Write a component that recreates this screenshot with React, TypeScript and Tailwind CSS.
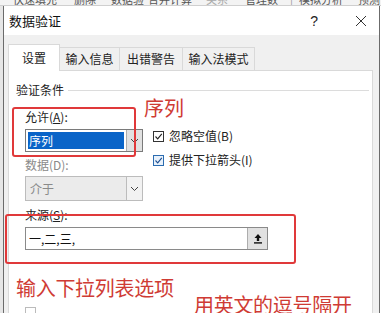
import React from "react";

const F = { fontFamily: '"Noto Sans CJK SC", "Microsoft YaHei", sans-serif' };

function Chevron() {
  return (
    <svg width="9" height="6" viewBox="0 0 9 6">
      <path d="M1 1 L4.5 4.5 L8 1" fill="none" stroke="#444" strokeWidth="1" />
    </svg>
  );
}

function CheckBox({ label, blue }: { label: string; blue?: boolean }) {
  return (
    <div className="flex items-center h-[14px]">
      <div
        className={`w-[11px] h-[11px] border flex items-center justify-center ${blue ? "border-[#2b6cb0] bg-[#e8f1fb]" : "border-[#333] bg-white"}`}
      >
        <svg width="9" height="9" viewBox="0 0 9 9">
          <path d="M1.5 4.5 L3.7 6.8 L7.8 1.8" fill="none" stroke={blue ? "#1d4f91" : "#222"} strokeWidth="1.1" />
        </svg>
      </div>
      <span className="ml-[5px] text-[12px] text-[#222] leading-none">{label}</span>
    </div>
  );
}

export default function App() {
  return (
    <div className="relative w-[381px] h-[313px] overflow-hidden bg-white" style={F}>
      {/* top ribbon strip, cut off */}
      <div className="h-[6px] overflow-hidden bg-[#f3f3f3] border-b border-[#cfcfcf]">
        <div className="flex text-[11px] leading-[11px] text-[#555] -mt-[6px] whitespace-nowrap">
          <span className="ml-[13px]">快速填充</span>
          <span className="ml-[17px]">删除</span>
          <span className="ml-[15px]">数据验</span>
          <span className="ml-[4px]">合并计算</span>
          <span className="ml-[14px] text-[#aaa]">关系</span>
          <span className="ml-[17px]">管理数</span>
          <span className="ml-[12px] text-[#999]">|</span>
          <span className="ml-[6px]">模拟分析</span>
          <span className="ml-[15px]">预测</span>
        </div>
      </div>

      <div className="flex">
        <div className="w-[3px] bg-[#e6e6e6]" />
        {/* dialog */}
        <div className="w-[377px] h-[307px] border-l border-r border-[#6b6b6b] bg-[#f0f0f0] flex flex-col">
          {/* title bar */}
          <div className="h-[29px] bg-white flex items-center shrink-0">
            <span className="ml-[5px] text-[13px] text-[#111] leading-none">数据验证</span>
            <span className="ml-auto text-[14px] text-[#222] leading-none mr-[37px]" style={{ fontFamily: '"Liberation Sans", sans-serif' }}>?</span>
            <svg width="12" height="12" viewBox="0 0 12 12" className="mr-[12px]">
              <path d="M1 1 L11 11 M11 1 L1 11" stroke="#333" strokeWidth="1" />
            </svg>
          </div>

          {/* body */}
          <div className="pl-[4px] pr-[6px] flex-1 flex flex-col">
            {/* tabs */}
            <div className="flex items-end mt-[8px] h-[27px] text-[12px] text-[#222]">
              <div className="w-[52px] h-[27px] bg-white border-t border-l border-r border-[#d9d9d9] flex items-center justify-center relative z-10 -mb-px">
                <span className="leading-none">设置</span>
              </div>
              <div className="w-[60px] h-[23px] border-t border-r border-[#d9d9d9] flex items-center justify-center">
                <span className="leading-none">输入信息</span>
              </div>
              <div className="w-[63px] h-[23px] border-t border-r border-[#d9d9d9] flex items-center justify-center">
                <span className="leading-none">出错警告</span>
              </div>
              <div className="w-[72px] h-[23px] border-t border-r border-[#d9d9d9] flex items-center justify-center">
                <span className="leading-none">输入法模式</span>
              </div>
            </div>

            {/* panel */}
            <div className="flex-1 bg-white border border-[#d9d9d9] border-b-0 flex flex-col">
              <div className="mt-[12px] h-[14px] flex items-center pl-[7px] pr-[3px]">
                <span className="text-[12px] leading-none text-[#222]">验证条件</span>
                <div className="flex-1 h-px bg-[#dcdcdc] ml-[4px]" />
              </div>

              <div className="pl-[16px] flex flex-col">
                <div className="mt-[13px] h-[14px] text-[12px] leading-[14px] text-[#222]">
                  允许(<span className="underline">A</span>):
                </div>

                <div className="flex mt-[5px]">
                  <div className="flex flex-col w-[118px]">
                    <div className="h-[23px] border border-[#7a7a7a] bg-white flex">
                      <div className="flex-1 m-[2px] bg-[#0a64c8] flex items-center pl-[1px]">
                        <span className="text-[12px] leading-none text-white">序列</span>
                      </div>
                      <div className="w-[16px] bg-[#e1e1e1] border-l border-[#adadad] flex items-center justify-center">
                        <Chevron />
                      </div>
                    </div>
                    <div className="mt-[6px] h-[14px] text-[12px] leading-[14px] text-[#8a8a8a]">数据(D):</div>
                    <div className="mt-[4px] h-[25px] border border-[#bcbcbc] bg-[#ebebeb] flex">
                      <div className="flex-1 flex items-center pl-[4px]">
                        <span className="text-[12px] leading-none text-[#8a8a8a]">介于</span>
                      </div>
                      <div className="w-[16px] bg-[#f2f2f2] border-l border-[#bcbcbc] flex items-center justify-center">
                        <Chevron />
                      </div>
                    </div>
                  </div>
                  <div className="ml-[10px] flex flex-col">
                    <CheckBox label="忽略空值(B)" />
                    <div className="mt-[10px]">
                      <CheckBox label="提供下拉箭头(I)" blue />
                    </div>
                  </div>
                </div>

                <div className="mt-[7px] h-[14px] text-[12px] leading-[14px] text-[#222]">
                  来源(<span className="underline">S</span>):
                </div>
                <div className="mt-[5px] w-[243px] h-[23px] border border-[#8a8a8a] bg-white flex">
                  <div className="flex-1 flex items-center pl-[3px]">
                    <span className="text-[12px] leading-none text-[#111]">一,二,三,</span>
                  </div>
                  <div className="w-[20px] bg-[#e1e1e1] border-l border-[#adadad] flex items-center justify-center">
                    <svg width="10" height="11" viewBox="0 0 10 11">
                      <path d="M5 1 L1.5 5 H3.8 V8 H6.2 V5 H8.5 Z" fill="#111" />
                      <rect x="1" y="9.2" width="8" height="1.4" fill="#111" />
                    </svg>
                  </div>
                </div>

                <div className="mt-[57px] flex items-center opacity-40">
                  <div className="w-[11px] h-[11px] border border-[#555]" />
                </div>
              </div>
            </div>
          </div>
        </div>
      </div>

      {/* red annotations */}
      <div className="absolute left-[12px] top-[107px] w-[124px] h-[50px] border-2 border-[#e0393a] rounded-[3px]" />
      <div className="absolute left-[5px] top-[214px] w-[291px] h-[50px] border-2 border-[#e0393a] rounded-[3px]" />
      <div className="absolute left-[144px] top-[96px] text-[20px] leading-[24px] text-[#cf3b34]">序列</div>
      <div className="absolute left-[16px] top-[276px] text-[20px] leading-[24px] text-[#cf3b34] tracking-[-0.3px]">输入下拉列表选项</div>
      <div className="absolute left-[194px] top-[293px] text-[20px] leading-[24px] text-[#cf3b34] tracking-[-0.3px]">用英文的逗号隔开</div>
    </div>
  );
}
